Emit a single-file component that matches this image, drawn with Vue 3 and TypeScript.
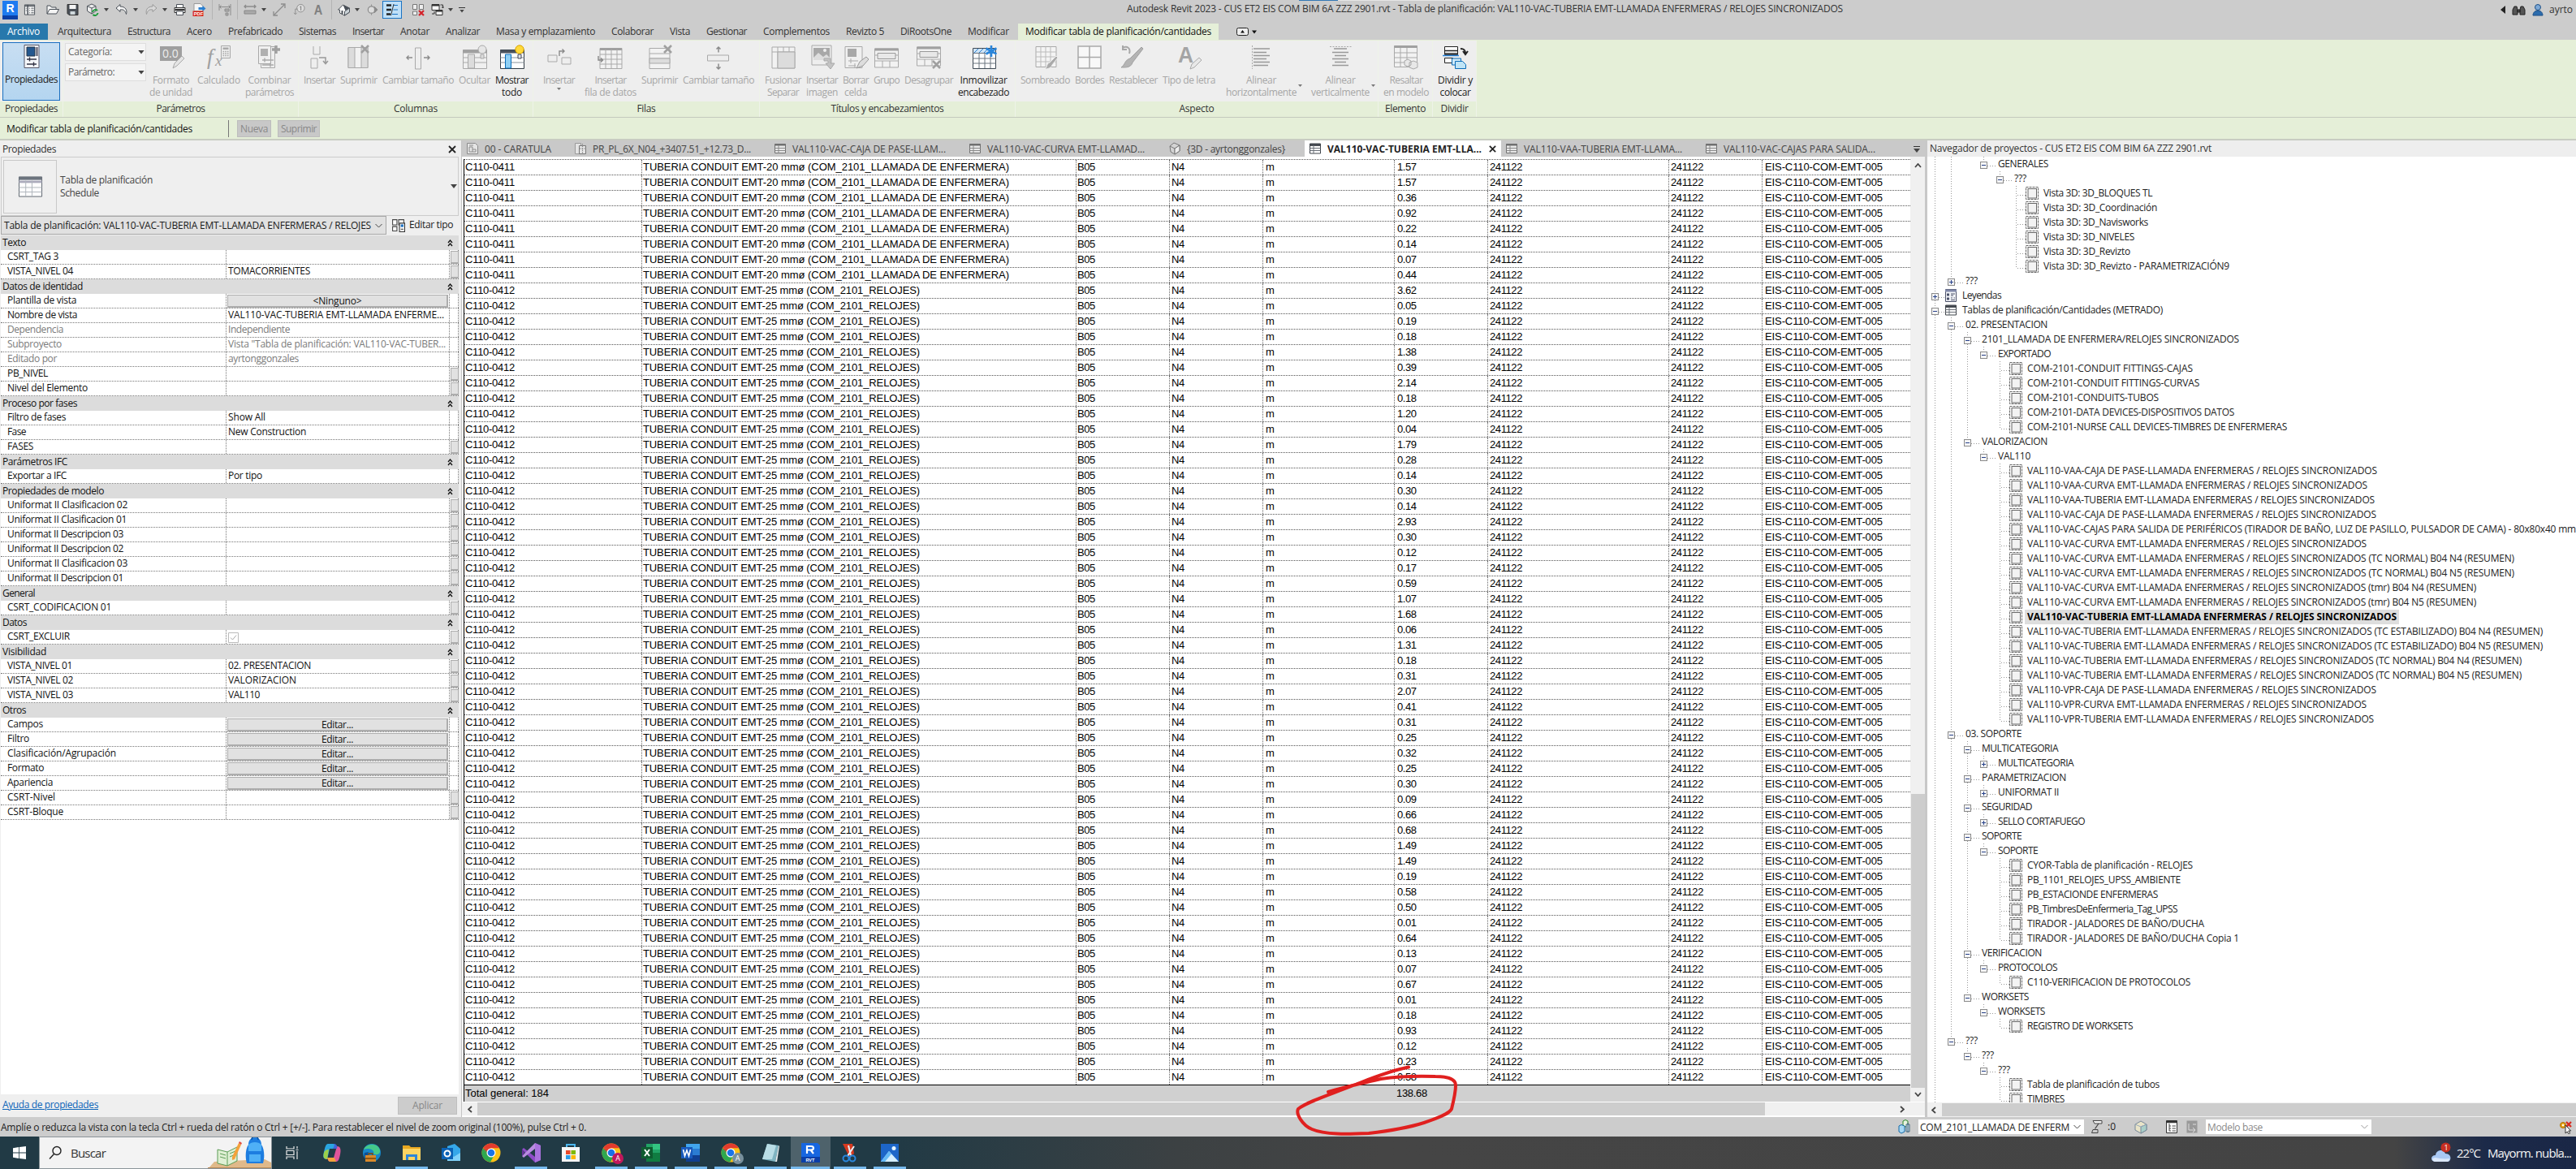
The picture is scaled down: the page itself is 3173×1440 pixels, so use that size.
<script setup lang="ts">
interface Btn { ic: string; l1: string; l2?: string; w: number; ml?: number; on?: boolean; dd?: 'below' | 'side'; w1?: number; w2?: number }
interface Panel { name: string; w: number; lw: number; btns: Btn[] }
interface Prop { n: string; w: number; v?: string; vw?: number; kind?: 'btn' | 'check'; dim?: boolean; side?: boolean }
interface Group { n: string; w: number; rows: Prop[] }
interface Node { d: number; t: string; w: number; k?: 'open' | 'shut' | 'leaf'; ic?: string; sel?: boolean }

// Tracks a label so that it spans the given width in pixels
const track = (el: HTMLElement, width?: number) => {
  if (!width) return
  el.style.letterSpacing = '0px'
  const natural = el.getBoundingClientRect().width
  const count = (el.textContent || '').length
  if (count) el.style.letterSpacing = ((width - natural) / count).toFixed(3) + 'px'
}
const vFit = { mounted: (el: HTMLElement, b: { value?: number }) => track(el, b.value) }

const G = '#a9a9a9'
const L = '#dcdcdc'
const K = '#4a5058'
const B = '#0c6cb8'

const icons: Record<string, string> = {
  // quick access, 16 x 16
  home: `<path d="M1.5 1.5h13v13h-13z" fill="#f4f4f4" stroke="${K}"/><path d="M1.5 3h13M5.5 1.5v13" stroke="${K}" stroke-width="1.6"/><path d="M7.5 6h1M10 6h3.5M7.5 9h1M10 9h3.5M7.5 12h1M10 12h3.5M3 6h1M3 9h1" stroke="${K}"/>`,
  open: `<path d="M1 13V3h4l1.5 2H12v2.5M1 13l3-5.500h11.500L12.500 13z" fill="#f4f4f4" stroke="${K}"/>`,
  save: `<path d="M1.5 1.500h13v13h-11l-2-2z" fill="${K}" stroke="#333"/><path d="M4 2h8v5H4z" fill="#f4f4f4"/><path d="M5 10h6v4H5z" fill="#cfd8dc"/>`,
  sync: `<path d="M7 1l5 2.500v6L7 13 1.500 9.500v-6z" fill="#eee" stroke="${K}"/><path d="M1.500 3.500L7 6l5-2.500M7 6v7" fill="none" stroke="${K}"/><path d="M8 11a3.500 3.500 0 0 1 6-2M14.500 12a3.500 3.500 0 0 1-6 2" stroke="#1f9a3d" stroke-width="2" fill="none"/>`,
  undo: `<path d="M6 1.500L1 6l5 4.500V8c4-.6 6 .5 7.500 5.500 1.500-5-1-9.500-7.500-9.500z" fill="#f4f4f4" stroke="${K}"/>`,
  redo: `<path d="M10 1.500L15 6l-5 4.500V8c-4-.6-6 .5-7.500 5.500C1 8.500 3.500 4 10 4z" fill="#d8d8d8" stroke="#999"/>`,
  print: `<path d="M4 1.500h8V6H4z" fill="#fff" stroke="${K}"/><path d="M1.500 5.500h13v6h-13z" fill="#e4e4e4" stroke="#333"/><path d="M2 7h12v2H2z" fill="#333"/><path d="M4 10h8v4.500H4z" fill="#fff" stroke="${K}"/>`,
  pdf: `<path d="M1.500.500h8l3 3v6h-11z" fill="#f6f6f6" stroke="#999"/><path d="M7 5h5V3l4 3.500-4 3.500V8H7z" fill="#2a7fd0"/><path d="M0 9.500h13V16H0z" fill="#d8281c"/><text x="1.200" y="14.800" font-size="5.800" font-weight="bold" fill="#fff" font-family="Liberation Sans">PDF</text>`,
  dims: `<path d="M1 1v8M15 1v14M1 4.500h14M3.500 2.500L1.500 4.500l2 2M12.500 2.500l2 2-2 2" stroke="#8c8c8c" fill="none"/><path d="M8 7h5v3H8zM9 12h3v3H9z" fill="#aaa" stroke="#8c8c8c"/>`,
  meas: `<path d="M1 4h14M3 2L1 4l2 2M13 2l2 2-2 2" stroke="#8c8c8c" stroke-width="1.300" fill="none"/><path d="M1 9h14v4H1z" fill="#aaa" stroke="#888"/>`,
  diag: `<path d="M2 14L14 2M1 10v5h5M10 1h5v5" stroke="#8c8c8c" stroke-width="1.300" fill="none"/>`,
  tag: `<circle cx="10" cy="6" r="5" fill="#ddd" stroke="#8c8c8c"/><path d="M6 7H3v7M1 12l2 2 2-2" stroke="#8c8c8c" fill="none"/><path d="M9 4.500L10.300 3.500V9" stroke="#777" fill="none"/>`,
  txt: `<text x="2" y="15" font-size="18" font-weight="bold" fill="#808080" font-family="Liberation Sans" textLength="12" lengthAdjust="spacingAndGlyphs">A</text>`,
  house: `<path d="M1 8l6-6 8 4v5l-6 4-6-3V8z" fill="#fff" stroke="${K}"/><path d="M7 2l8 4-5 3z" fill="${K}"/><path d="M9 10v5l6-4V6z" fill="#cbd3d8" stroke="${K}"/><path d="M5 9h2v4H5z" fill="${K}"/>`,
  sect: `<circle cx="7" cy="8" r="4.500" fill="#ddd" stroke="#8c8c8c" stroke-width="1.300"/><path d="M7 1v2.500M7 12.500V15M11 4l4 4-4 4z" stroke="#8c8c8c" fill="#8c8c8c"/>`,
  thin: `<path d="M1 2.500h6M1 8h6M1 13.500h5" stroke="#222" stroke-width="2.600"/><path d="M9.500 2.500H15M9.500 8H15M8 13.500h7" stroke="#1a74c4"/><path d="M10 1L6.500 15" stroke="#333"/>`,
  close: `<path d="M1.500 1.500h5v6h-5zM9.500 1.500h5v6h-5zM1.500 10h5v4.500h-5z" fill="#eee" stroke="#777"/><path d="M9 9l6 6M15 9l-6 6" stroke="#d3222a" stroke-width="2.200"/>`,
  swap: `<path d="M1.500 1.500h9v7h-9zM6.500 8.500h8v6h-8z" fill="#f6f6f6" stroke="#333"/><path d="M1.500 2.500h9M6.500 9.500h8" stroke="#333" stroke-width="2"/><path d="M12 2h3v4M13.500 4.500L15 6l1.200-1.500M4.500 10v3h-3" stroke="#333" fill="none"/>`,
  // document kinds, 16 x 16
  sheet: `<path d="M1.500 1.500h10l3 3v10h-13z" fill="#e4e4e4" stroke="#8a8a8a"/><path d="M4 12V6h4v6zM8 9h4v3H8M4 4h5" fill="none" stroke="#8a8a8a"/>`,
  plan: `<path d="M1.500 1.500h7v13h-7z" fill="#e4e4e4" stroke="#999"/><path d="M6.500 4.500h8v10h-8z" fill="#e4e4e4" stroke="#777"/><path d="M10.500 2v12M7 8h7" stroke="#888" stroke-dasharray="1.500 1"/>`,
  table: `<path d="M1.500 2.500h13v11h-13z" fill="#e8e8e8" stroke="#707070"/><path d="M1 3.500h14" stroke="#707070" stroke-width="2"/><path d="M1.500 7.500h13M1.500 10.500h13M6 4v9.500" stroke="#8a8a8a"/>`,
  tableOn: `<path d="M1.500 2h13v12h-13z" fill="#fff" stroke="#3f444b"/><path d="M1 3.500h14" stroke="#3f444b" stroke-width="2.800"/><path d="M1.500 7.500h13M1.500 10.500h13M6 4v10" stroke="#6a7078"/>`,
  legend: `<path d="M1.500.500h13v15h-13z" fill="#f2f4f8" stroke="#4a5068"/><path d="M1 2h14" stroke="#8088a8" stroke-width="3"/><path d="M3 5.500h3v3H3z" fill="#4a5068"/><circle cx="4.500" cy="12" r="1.700" fill="#4a5068"/><path d="M8 6h5M8 8h3M8 11h2M11.500 11H13M8 13.500h5" stroke="#4a5068"/>`,
  view3d: `<path d="M2 5l5-4 7 3v7l-6 4-5-3z" fill="#d4d4d4" stroke="#777"/><path d="M2 5l6 3 6-4M8 8v7" fill="none" stroke="#777"/><path d="M8 8l6-4v7l-6 4z" fill="#eee" stroke="#777"/>`,
  edit: `<path d="M1.500 1.500h5v6h-5zM8.500 1.500h6v6h-6zM1.500 9.500h5v5h-5z" fill="#fff" stroke="#444"/><path d="M9.500 5.500h6v10h-6z" fill="#fff" stroke="#333"/><path d="M11 7h3v3h-3z" fill="#1a6fc0"/><path d="M11 12.500h3" stroke="#333"/>`,
  // ribbon, 32 x 32
  props: `<path d="M7 1.500h18v28H7z" fill="#f6f8fb" stroke="#556"/><path d="M10 4h10v11H10z" fill="#24588f" stroke="#234"/><path d="M22.500 4v11" stroke="#556" stroke-width="2"/><path d="M10 19h12M10 25h12M13.500 16.500v5M18.500 22.500v5" stroke="#334" stroke-width="1.400"/>`,
  fmt: `<path d="M2 2h27v18H2z" fill="#9f9f9f"/><text x="5" y="16" font-size="14" fill="#eee" font-family="Open Sans">0.0</text><path d="M18 29l2-6 9-9 3 3-9 9z" fill="#e4e4e4" stroke="${G}"/>`,
  calc: `<text x="1" y="24" font-size="27" font-style="italic" fill="#a0a0a0" font-family="Liberation Serif">f</text><text x="11" y="26" font-size="19" font-style="italic" fill="#a0a0a0" font-family="Liberation Serif">x</text><path d="M18.500 1.500h11v15h-11z" fill="#eee" stroke="${G}"/><path d="M20.500 3.500h7v2.500h-7z" fill="${G}"/><path d="M20.500 8.500h7M20.500 11h7M20.500 13.500h7" stroke="${G}" stroke-dasharray="1.600 1.100" stroke-width="1.600"/>`,
  comb: `<path d="M5.500 2.500h17v26h-17z" fill="#eee" stroke="${G}"/><path d="M2.500 1.500h15v22h-15z" fill="#f0f0f0" stroke="${G}"/><path d="M5 5h9v9H5z" fill="#b0b0b0"/><path d="M7 19h14M7 25h14M10 16.500v5M17 22.500v5" stroke="${G}" stroke-width="1.400"/><path d="M24 1v10M19 6h10" stroke="#a0a0a0" stroke-width="3.400"/>`,
  insc: `<path d="M8 2v10h8V2M5 29V17h8v12z" fill="#eee" stroke="${G}"/><path d="M15 16h8v7M20 20l3 3.500 3-3.500" stroke="#999" stroke-width="1.500" fill="none"/>`,
  delc: `<path d="M3 3.500h24v25H3z" fill="#f2f2f2" stroke="${G}"/><path d="M3 3.500h8v25H3zM19 3.500h8v25h-8z" fill="${L}" stroke="${G}"/><path d="M19 1l9 9M28 1l-9 9" stroke="#a0a0a0" stroke-width="2.600"/>`,
  wide: `<path d="M12.500 4h7v26h-7z" fill="#eee" stroke="${G}"/><path d="M9 16H2M4.500 13.500L2 16l2.500 2.500M23 16h7M27.500 13.500L30 16l-2.500 2.500" stroke="#8a8a8a" stroke-width="1.400" fill="none"/>`,
  hide: `<path d="M1.500 6.500h29v23h-29z" fill="#f0f0f0" stroke="${G}"/><path d="M1 8.500h30" stroke="#a0a0a0" stroke-width="4"/><path d="M1.500 16h29M1.500 22h29" stroke="${G}"/><path d="M7.500 12h8v17h-8z" fill="${L}" stroke="${G}"/><circle cx="25" cy="6" r="5" fill="#e6e6e6" stroke="${G}"/><path d="M23 12h4v5h-4z" fill="${L}" stroke="${G}"/>`,
  show: `<path d="M1.500 6.500h29v23h-29z" fill="#fff" stroke="#333c46"/><path d="M1 8.500h30" stroke="#4a525c" stroke-width="4"/><path d="M1.500 16h29M1.500 22h29" stroke="#8a929a"/><path d="M7.500 12h7v17h-7z" fill="#8fd0f5" stroke="#0c6cb8"/><circle cx="25" cy="6" r="5.200" fill="#ffd93a" stroke="#d9a400"/><path d="M23 12h4v5h-4z" fill="#dfe6ea" stroke="#445"/>`,
  insr: `<path d="M2 13h11v8H2zM19 16h11v8H19z" fill="#eee" stroke="${G}"/><path d="M16 14V8h6M19.500 5.500L22 8l-2.500 2.500" stroke="#8a8a8a" stroke-width="1.400" fill="none"/>`,
  insd: `<path d="M3 4.500h27v25H3z" fill="#f2f2f2" stroke="${G}"/><path d="M3 5.500h27" stroke="#a0a0a0" stroke-width="3"/><path d="M3 12h27M3 18h27M3 24h27M10 6v23M17 6v23M24 6v23" stroke="${G}"/><path d="M1 14v5h5M4 16.500L6.500 19 4 21.500" stroke="#888" stroke-width="1.400" fill="none"/>`,
  delr: `<path d="M3 4.500h25v25H3z" fill="#f2f2f2" stroke="${G}"/><path d="M3 11h25M3 17h25" stroke="${G}"/><path d="M3 17h25v6H3z" fill="${L}" stroke="${G}"/><path d="M21 1l9 9M30 1l-9 9" stroke="#a0a0a0" stroke-width="2.600"/>`,
  tall: `<path d="M2.500 13h26v7h-26z" fill="#eee" stroke="${G}"/><path d="M16 9.500V3M13.500 5.500L16 3l2.500 2.500M16 23.500V30M13.500 27.500L16 30l2.500-2.500" stroke="#8a8a8a" stroke-width="1.500" fill="none"/>`,
  merge: `<path d="M2 3h28v26H2z" fill="#f2f2f2" stroke="${G}"/><path d="M2 9h28M9 3v26M16 3v6M23 3v6" stroke="${G}"/><path d="M9 9h21v20H9z" fill="${L}" stroke="${G}"/>`,
  image: `<path d="M3 1h24v24H3z" fill="#eee" stroke="${G}"/><path d="M5 4h20v12H5z" fill="#a8a8a8"/><path d="M5 16l6-6 6 5 4-3 4 4v3H5z" fill="#ddd"/><circle cx="19" cy="7" r="2" fill="#eee"/><path d="M18 17h8v6h5l-5 7-6-7h3v-3h-5z" fill="#c4c4c4" stroke="${G}"/>`,
  erase: `<path d="M3 2.500h21v26H3z" fill="#f0f0f0" stroke="${G}"/><path d="M6 5h11v10H6z" fill="#a8a8a8"/><path d="M7 20h12M7 26h9M10 17v6M15 23v6" stroke="${G}"/><path d="M17 29l4-8 8-6 3 3-7 8z" fill="#ddd" stroke="#999"/>`,
  grp: `<path d="M1.500 5h29v23h-29z" fill="#f2f2f2" stroke="${G}"/><path d="M1.500 6h29" stroke="#a0a0a0" stroke-width="3"/><path d="M1.500 13h29M1.500 20h29M11 20v8M20 20v8" stroke="${G}"/><path d="M5 10.500h22v7H5z" fill="#e8e8e8" stroke="#999"/>`,
  ungrp: `<path d="M1.500 3h29v23h-29z" fill="#f2f2f2" stroke="${G}"/><path d="M1.500 4h29" stroke="#a0a0a0" stroke-width="3"/><path d="M1.500 11h29M1.500 18h29M11 18v8M20 18v8" stroke="${G}"/><path d="M5 8.500h22v7H5z" fill="#e8e8e8" stroke="#999"/><path d="M21 20l9 9M30 20l-9 9" stroke="#a0a0a0" stroke-width="2.600"/>`,
  freeze: `<path d="M2.500 4.500h28v25h-28z" fill="#fff" stroke="#3f4a56"/><path d="M3 5h27v5H3z" fill="#cfe4f6"/><path d="M4 10l5-5M10 10l5-5M16 10l5-5" stroke="#2a7fd0"/><path d="M2.500 10.500h28M2.500 17h28M2.500 23h28M10 10v19M17 10v19M24 10v19" stroke="#6a747e"/><path d="M25 1v14M18.500 4.500l13 7M31.500 4.500l-13 7" stroke="#2a86dc" stroke-width="2.600"/>`,
  shade: `<path d="M4 2.500h25v25H4z" fill="#f4f4f4" stroke="${G}"/><path d="M4 9h25M4 15h25M4 21h25M10 2.500v25M16 2.500v25M22 2.500v25" stroke="#bbb"/><path d="M15 30c3 0 8-1 9-5l7-9-2-2-8 8c-4 1-3 6-6 8z" fill="#aaa" stroke="#eee"/>`,
  bord: `<path d="M2 2h28v27H2z" fill="#f8f8f8" stroke="${G}" stroke-width="1.500"/><path d="M16 2v27M2 15.500h28" stroke="${G}" stroke-width="1.500"/>`,
  reset: `<path d="M3 4c5-3 10 0 8 7M3 1v5h5" stroke="#a8a8a8" stroke-width="2" fill="none"/><path d="M1 28c4 0 12 1 14-6l13-17-2-2-14 14c-7 2-6 8-11 11z" fill="#b4b4b4" stroke="#a0a0a0"/>`,
  font: `<text x="2" y="22" font-size="28" font-weight="bold" fill="#a4a4a4" font-family="Liberation Sans" textLength="19" lengthAdjust="spacingAndGlyphs">A</text><path d="M17 30l2-6 9-8 3 3-9 9z" fill="#e8e8e8" stroke="${G}"/>`,
  alh: `<path d="M4.500 1v29" stroke="${G}" stroke-dasharray="2 1.500"/><path d="M6 5h20M6 9.500h16M6 13.500h20M6 17.500h16M6 21.500h20M6 25.500h18" stroke="#999" stroke-width="1.300"/>`,
  alv: `<path d="M3 2.500h27" stroke="${G}" stroke-dasharray="2 1.500"/><path d="M8 5h16M6 9.500h20M9 13.500h14M6 17.500h20M9 21.500h14M6 25.500h20" stroke="#999" stroke-width="1.300"/>`,
  hilite: `<path d="M1.500 1.500h28v26h-28z" fill="#f2f2f2" stroke="${G}"/><path d="M1.500 2.500h28" stroke="#a0a0a0" stroke-width="3"/><path d="M1.500 10h28M1.500 16h28M1.500 22h28M9 4v23M17 4v23" stroke="${G}"/><path d="M14 20l4-2 4 2v5l-4 2-4-2zM20 22l5-2 5 2v6l-5 2-5-2z" fill="#e8e8e8" stroke="${G}"/>`,
  split: `<path d="M2.500 2.500h16v10h-16zM2.500 16.500h10v6h-10z" fill="#fff" stroke="#222"/><path d="M2.500 7.500h16M2.500 11h16" stroke="#222" stroke-width="1.300"/><path d="M0 13.500h20" stroke="#2a86dc" stroke-width="1.500"/><path d="M22 5c5 0 6 2 6 6M25 8l3 4 3-4" stroke="#222" stroke-width="2" fill="none"/><path d="M11.500 17h11v8h-11z" fill="#cfeaf8" stroke="${B}"/><path d="M15.500 20.500h9l4 4v5h-13z" fill="#bfe4f6" stroke="${B}"/>`,
  schedule: `<path d="M1.500 3h29v26h-29z" fill="#fdfdfd" stroke="#5a626c"/><path d="M1 5h30" stroke="#6b737d" stroke-width="4"/><path d="M1.500 9.500h29" stroke="#aab" stroke-width="3"/><path d="M1.500 17h29M1.500 23h29M10 8v21M18 8v21" stroke="#aeb4ba"/>`,
  // status bar, 16 x 18
  ws: `<path d="M6 2l3-1.500L12 2v6L9 9 6 8z" fill="#e8f2e0" stroke="#2d8a2d"/><path d="M1 8l3-1.500L8 8v7l-4 2-3-2z" fill="#a8d8f4" stroke="#146aa8"/><path d="M10 6h4v9h-4zM12 4v12" fill="#cfe4f0" stroke="#44677c"/>`,
  req: `<path d="M3 1.500h11v3.500H9L5 5z" fill="#f4f4f4" stroke="#444"/><path d="M10 5L5.500 11.500" stroke="#444" stroke-width="1.300"/><path d="M3 12.500h6v4H1.500z" fill="#ccc" stroke="#444"/>`,
  cube: `<path d="M8 2l7 4v7l-7 4-7-4V6z" fill="#e9e4c8" stroke="#789"/><path d="M8 9v8l7-4V6z" fill="#a9cfc8" stroke="#789"/><path d="M1 6l7 3 7-3" fill="none" stroke="#9ab"/>`,
  opts: `<path d="M1.500 1.500h13v15h-13z" fill="#fff" stroke="#333"/><path d="M1 3h14" stroke="#333" stroke-width="2.500"/><path d="M5 5v9M5 8h2M5 11h2M5 14h2M8.500 8H13M8.500 11H13M8.500 14H13" stroke="#444"/>`,
  opt2: `<path d="M1.500 1.500h13v15h-13z" fill="#999"/><path d="M4 5v8h8M9 10l3 3-3 3M9 6h4" stroke="#ddd" fill="none"/>`,
  key: `<circle cx="4" cy="7" r="3.500" fill="#e8a61c" stroke="#a86c00"/><circle cx="4" cy="7" r="1.200" fill="#fff"/><path d="M8 3l6 6M14 3L8 9" stroke="#d8281c" stroke-width="2.200"/><path d="M7 7v10l2.200-2 2 3 1.500-1-2-3h3z" fill="#fff" stroke="#333"/>`,
  // taskbar, 24 x 24
  tview: `<path d="M5 4v3h9V4M5 20v-3h9v3M5 9.500h9v5H5zM18 4v3M18 10v10M16.500 8.500h3" fill="none" stroke="#e8e8e8" stroke-width="1.200"/>`,
  copilot: `<path d="M7 1h7c3 0 3 3 4 6H9L6 20c-6 0-5-5-4-9S4 1 7 1z" fill="#2aa5e0"/><path d="M2 12c1-3 3-4 6-4l-2 12c-5 0-5-4-4-8z" fill="#9bd04a"/><path d="M17 23h-7c-3 0-3-3-4-5h8l4-14c5 0 5 5 4 10s-2 9-5 9z" fill="#e0559a"/><path d="M17 23h-7c-2 0-3-2-4-5h9z" fill="#f2a33c"/><path d="M14 1c3 0 5 2 4 6h-5l2-4z" fill="#4263d8"/>`,
  edge: `<circle cx="12" cy="12" r="11" fill="#1787c9"/><path d="M2 8C5 0 20-1 22 9c1 6-7 6-8 4 2-4-5-8-12-5z" fill="#45c98a"/><path d="M8 11c-3 5 2 11 9 10-9 5-16-2-14-9z" fill="#0c4f96"/><path d="M4 15h13v8H4z" fill="#d8892a"/><path d="M8 15v-2h5v2M4 19h13" stroke="#7b4708" fill="none" stroke-width="1.300"/>`,
  folder: `<path d="M1 3h8l2 2h12v16H1z" fill="#e8a820"/><path d="M1 7h22v14H1z" fill="#fcd462"/><path d="M5 14h14v7h-3v-4H8v4H5z" fill="#2d86d8"/>`,
  outlook: `<path d="M7 4l9-3 7 6v13H7z" fill="#35a8ea"/><path d="M7 12l8 5 8-5v10H7z" fill="#7fd2fa"/><path d="M0 6h14v14H0z" fill="#0b62b5"/><circle cx="7" cy="13" r="3.500" fill="none" stroke="#fff" stroke-width="2"/>`,
  chrome: `<circle cx="12" cy="12" r="11.500" fill="#fbc116"/><path d="M2 6.200A11.500 11.500 0 0 1 22 6.200H12z" fill="#e33b2e"/><path d="M2 6.200A11.500 11.500 0 0 0 11 23.500l5-9L12 12 7 14.500z" fill="#2da94f"/><path d="M2 6.200L7 15l5-9z" fill="#e33b2e"/><path d="M2 6.200l5 8.800 1-3z" fill="#2da94f"/><circle cx="12" cy="12" r="5.500" fill="#fff"/><circle cx="12" cy="12" r="4.300" fill="#1a73e8"/>`,
  vs: `<path d="M17 0l7 3v18l-7 3L1 8l2-2 14 11z" fill="#8e4bc6"/><path d="M17 0v7L3 18l-2-2z" fill="#b98be0"/><path d="M1 8v8l3-4z" fill="#6b2fa0"/><path d="M17 0l7 3v18l-7 3z" fill="#a871dc"/>`,
  store: `<path d="M7 6V2h10v4" fill="none" stroke="#4cb6ee" stroke-width="2"/><path d="M1 5h22v18H1z" fill="#f5f5f5"/><path d="M6 9h5.500v5H6z" fill="#e8492a"/><path d="M12.500 9H18v5h-5.500z" fill="#7fba00"/><path d="M6 15h5.500v5H6z" fill="#2a9de8"/><path d="M12.500 15H18v5h-5.500z" fill="#fcb900"/>`,
  excel: `<path d="M6 1h17v22H6z" fill="#21a366"/><path d="M14 1h9v7h-9z" fill="#33c481"/><path d="M6 12h17v11H6z" fill="#107c41"/><path d="M0 5h14v14H0z" fill="#0e5c30"/><path d="M4 8l6 8M10 8l-6 8" stroke="#fff" stroke-width="2"/>`,
  word: `<path d="M6 1h17v22H6z" fill="#2b7cd3"/><path d="M6 1h17v6H6z" fill="#41a5ee"/><path d="M6 15h17v8H6z" fill="#103f91"/><path d="M0 5h14v14H0z" fill="#185abd"/><path d="M2.500 8l2 8L7 9l2.500 7 2-8" stroke="#fff" stroke-width="1.600" fill="none"/>`,
  note: `<path d="M8 1l14 2-4 20-16-3z" fill="#7fb4c2"/><path d="M8 1l11 2-5 17-12 0z" fill="#b9dde6"/><path d="M18 23l4-20 1 1-3 19z" fill="#e8eef0"/>`,
  revit: `<path d="M1 0h20l3 3v21H1z" fill="#1766e0"/><path d="M1 17h23v7H1z" fill="#0a3ea8"/><path d="M8 13V4h5c4 0 4 4.500 0 4.500H8M12.500 8.500L16 13" stroke="#fff" stroke-width="2.200" fill="none"/><text x="6.500" y="22.500" font-size="5.500" font-weight="bold" fill="#fff" font-family="Liberation Sans">RVT</text>`,
  snip: `<path d="M3 1h12l2 12-6 4z" fill="#d83a20"/><path d="M10 3l3 12M17 4L9 16" stroke="#e8eef4" stroke-width="2"/><circle cx="7" cy="19" r="3.500" fill="none" stroke="#2a86dc" stroke-width="2"/><circle cx="15" cy="19" r="3.500" fill="none" stroke="#2a86dc" stroke-width="2"/>`,
  photos: `<path d="M1 1h22v22H1z" fill="#1d66c8"/><path d="M1 23l10-13 12 13z" fill="#d5efff"/><path d="M11 10l3 3.500L6 23H1z" fill="#63b9f5"/><circle cx="17" cy="6.500" r="2.500" fill="#e6f5ff"/>`,
}

const qat: { ic: string; w: number; g: number; box?: boolean }[] = [
  { ic: 'home', w: 15, g: 7 }, { ic: 'open', w: 16, g: 13 }, { ic: 'save', w: 17, g: 8 }, { ic: 'sync', w: 16, g: 8 },
  { ic: 'v', w: 6, g: 6 }, { ic: 'undo', w: 16, g: 8 }, { ic: 'v', w: 6, g: 6 }, { ic: 'redo', w: 16, g: 8 },
  { ic: 'v', w: 6, g: 6 }, { ic: 'print', w: 17, g: 7 }, { ic: 'pdf', w: 17, g: 7 }, { ic: '|', w: 1, g: 7 },
  { ic: 'dims', w: 16, g: 7 }, { ic: '|', w: 1, g: 7 }, { ic: 'meas', w: 16, g: 7 }, { ic: 'v', w: 6, g: 6 },
  { ic: 'diag', w: 16, g: 8 }, { ic: 'tag', w: 15, g: 9 }, { ic: 'txt', w: 14, g: 9 }, { ic: '|', w: 1, g: 9 },
  { ic: 'house', w: 17, g: 6 }, { ic: 'v', w: 6, g: 5 }, { ic: 'sect', w: 15, g: 8 }, { ic: 'thin', w: 24, g: 5, box: true },
  { ic: 'close', w: 16, g: 12 }, { ic: 'swap', w: 17, g: 7 }, { ic: 'v', w: 6, g: 5 }, { ic: '=', w: 8, g: 7 },
]

const menu: [string, number][] = [
  ['Arquitectura', 66], ['Estructura', 53], ['Acero', 31], ['Prefabricado', 67], ['Sistemas', 46], ['Insertar', 39],
  ['Anotar', 36], ['Analizar', 42], ['Masa y emplazamiento', 122], ['Colaborar', 52], ['Vista', 25], ['Gestionar', 50],
  ['Complementos', 82], ['Revizto 5', 47], ['DiRootsOne', 63], ['Modificar', 51],
]

const panels: Panel[] = [
  { name: 'Columnas', w: 289, lw: 54, btns: [
    { ic: 'insc', l1: 'Insertar', w: 39 }, { ic: 'delc', l1: 'Suprimir', w: 46 }, { ic: 'wide', l1: 'Cambiar tamaño', w: 88 },
    { ic: 'hide', l1: 'Ocultar', w: 39 }, { ic: 'show', l1: 'Mostrar', l2: 'todo', w: 41, w2: 25, on: true }] },
  { name: 'Filas', w: 279, lw: 23, btns: [
    { ic: 'insr', l1: 'Insertar', w: 39, ml: 6, dd: 'below' }, { ic: 'insd', l1: 'Insertar', l2: 'fila de datos', w: 64, w1: 39, ml: 6 },
    { ic: 'delr', l1: 'Suprimir', w: 45 }, { ic: 'tall', l1: 'Cambiar tamaño', w: 88 }] },
  { name: 'Títulos y encabezamientos', w: 315, lw: 139, btns: [
    { ic: 'merge', l1: 'Fusionar', l2: 'Separar', w: 45, w2: 39 }, { ic: 'image', l1: 'Insertar', l2: 'imagen', w: 39 },
    { ic: 'erase', l1: 'Borrar', l2: 'celda', w: 32, w2: 28 }, { ic: 'grp', l1: 'Grupo', w: 32 }, { ic: 'ungrp', l1: 'Desagrupar', w: 60 },
    { ic: 'freeze', l1: 'Inmovilizar', l2: 'encabezado', w: 63, w1: 58, on: true }] },
  { name: 'Aspecto', w: 447, lw: 43, btns: [
    { ic: 'shade', l1: 'Sombreado', w: 61 }, { ic: 'bord', l1: 'Bordes', w: 36 }, { ic: 'reset', l1: 'Restablecer', w: 60 },
    { ic: 'font', l1: 'Tipo de letra', w: 65 }, { ic: 'alh', l1: 'Alinear', l2: 'horizontalmente', w: 87, w1: 37, ml: 7, dd: 'side' },
    { ic: 'alv', l1: 'Alinear', l2: 'verticalmente', w: 72, w1: 37, ml: 12, dd: 'side' }] },
  { name: 'Elemento', w: 67, lw: 50, btns: [{ ic: 'hilite', l1: 'Resaltar', l2: 'en modelo', w: 56, w1: 41 }] },
  { name: 'Dividir', w: 54, lw: 34, btns: [{ ic: 'split', l1: 'Dividir y', l2: 'colocar', w: 43, w2: 38, on: true }] },
]
const paramBtns: Btn[] = [
  { ic: 'fmt', l1: 'Formato', l2: 'de unidad', w: 53, w1: 45 }, { ic: 'calc', l1: 'Calculado', w: 53 }, { ic: 'comb', l1: 'Combinar', l2: 'parámetros', w: 60, w1: 53 },
]

const u = (n: string, w: number): Prop => ({ n, w, side: true })
const e = (n: string, w: number): Prop => ({ n, w, v: 'Editar...', vw: 39, kind: 'btn' })
const groups: Group[] = [
  { n: 'Texto', w: 29, rows: [u('CSRT_TAG 3', 63), { n: 'VISTA_NIVEL 04', w: 81, v: 'TOMACORRIENTES', vw: 101, side: true }] },
  { n: 'Datos de identidad', w: 99, rows: [
    { n: 'Plantilla de vista', w: 85, v: '<Ninguno>', vw: 60, kind: 'btn' },
    { n: 'Nombre de vista', w: 86, v: 'VAL110-VAC-TUBERIA EMT-LLAMADA ENFERME...', vw: 266 },
    { n: 'Dependencia', w: 69, v: 'Independiente', vw: 76, dim: true },
    { n: 'Subproyecto', w: 67, v: 'Vista "Tabla de planificación: VAL110-VAC-TUBER...', vw: 268, dim: true },
    { n: 'Editado por', w: 61, v: 'ayrtonggonzales', vw: 87, dim: true },
    u('PB_NIVEL', 50), u('Nivel del Elemento', 99)] },
  { n: 'Proceso por fases', w: 92, rows: [
    { n: 'Filtro de fases', w: 72, v: 'Show All', vw: 46 }, { n: 'Fase', w: 23, v: 'New Construction', vw: 96 }, u('FASES', 32)] },
  { n: 'Parámetros IFC', w: 80, rows: [{ n: 'Exportar a IFC', w: 73, v: 'Por tipo', vw: 42 }] },
  { n: 'Propiedades de modelo', w: 125, rows: [
    u('Uniformat II Clasificacion 02', 148), u('Uniformat II Clasificacion 01', 147), u('Uniformat II Descripcion 03', 143),
    u('Uniformat II Descripcion 02', 143), u('Uniformat II Clasificacion 03', 148), u('Uniformat II Descripcion 01', 143)] },
  { n: 'General', w: 40, rows: [u('CSRT_CODIFICACION 01', 128)] },
  { n: 'Datos', w: 30, rows: [{ n: 'CSRT_EXCLUIR', w: 77, kind: 'check', side: true }] },
  { n: 'Visibilidad', w: 54, rows: [
    { n: 'VISTA_NIVEL 01', w: 80, v: '02. PRESENTACION', vw: 102, side: true },
    { n: 'VISTA_NIVEL 02', w: 81, v: 'VALORIZACION', vw: 84, side: true },
    { n: 'VISTA_NIVEL 03', w: 81, v: 'VAL110', vw: 39, side: true }] },
  { n: 'Otros', w: 29, rows: [
    e('Campos', 44), e('Filtro', 27), e('Clasificación/Agrupación', 134), e('Formato', 45), e('Apariencia', 56),
    u('CSRT-Nivel', 59), u('CSRT-Bloque', 69)] },
]

const tabs: { ic: string; t: string; w: number; tw: number; on?: boolean }[] = [
  { ic: 'sheet', t: '00 - CARATULA', w: 133, tw: 82 },
  { ic: 'plan', t: 'PR_PL_6X_N04_+3407.51_+12.73_D...', w: 246, tw: 195 },
  { ic: 'table', t: 'VAL110-VAC-CAJA DE PASE-LLAM...', w: 240, tw: 189 },
  { ic: 'table', t: 'VAL110-VAC-CURVA EMT-LLAMAD...', w: 246, tw: 194 },
  { ic: 'view3d', t: '{3D - ayrtonggonzales}', w: 173, tw: 121 },
  { ic: 'tableOn', t: 'VAL110-VAC-TUBERIA EMT-LLA...', w: 242, tw: 190, on: true },
  { ic: 'table', t: 'VAL110-VAA-TUBERIA EMT-LLAMA...', w: 246, tw: 195 },
  { ic: 'table', t: 'VAL110-VAC-CAJAS PARA SALIDA...', w: 240, tw: 187 },
]

const lengths = ('1.57 1.57 0.36 0.92 0.22 0.14 0.07 0.44 3.62 0.05 0.19 0.18 1.38 0.39 2.14 0.18 1.20 0.04 1.79 0.28 0.14 0.30 0.14 2.93 ' +
  '0.30 0.12 0.17 0.59 1.07 1.68 0.06 1.31 0.18 0.31 2.07 0.41 0.31 0.25 0.32 0.25 0.30 0.09 0.66 0.68 1.49 1.49 0.19 0.58 ' +
  '0.50 0.01 0.64 0.13 0.07 0.67 0.01 0.18 0.93 0.12 0.23 0.58').split(' ')
const rows = lengths.map((len, i) => ({
  code: i < 8 ? 'C110-0411' : 'C110-0412',
  desc: i < 8 ? 'TUBERIA CONDUIT EMT-20 mmø (COM_2101_LLAMADA DE ENFERMERA)' : 'TUBERIA CONDUIT EMT-25 mmø (COM_2101_RELOJES)',
  dw: i < 8 ? 451 : 341,
  len,
}))

const R = ' ENFERMERAS / RELOJES SINCRONIZADOS'
const f = (d: number, t: string, w: number): Node => ({ d, t, w, k: 'leaf' })
const o = (d: number, t: string, w: number): Node => ({ d, t, w, k: 'open' })
const s = (d: number, t: string, w: number): Node => ({ d, t, w, k: 'shut' })
const nodes: Node[] = [
  o(3, 'GENERALES', 62), o(4, '???', 15),
  f(5, 'Vista 3D: 3D_BLOQUES TL', 134), f(5, 'Vista 3D: 3D_Coordinación', 140), f(5, 'Vista 3D: 3D_Navisworks', 129),
  f(5, 'Vista 3D: 3D_NIVELES', 112), f(5, 'Vista 3D: 3D_Revizto', 107), f(5, 'Vista 3D: 3D_Revizto - PARAMETRIZACIÓN9', 229),
  s(1, '???', 15),
  { d: 0, t: 'Leyendas', w: 48, k: 'shut', ic: 'legend' },
  { d: 0, t: 'Tablas de planificación/Cantidades (METRADO)', w: 247, k: 'open', ic: 'tableOn' },
  o(1, '02. PRESENTACION', 101), o(2, '2101_LLAMADA DE ENFERMERA/RELOJES SINCRONIZADOS', 317), o(3, 'EXPORTADO', 65),
  f(4, 'COM-2101-CONDUIT FITTINGS-CAJAS', 204), f(4, 'COM-2101-CONDUIT FITTINGS-CURVAS', 212), f(4, 'COM-2101-CONDUITS-TUBOS', 162),
  f(4, 'COM-2101-DATA DEVICES-DISPOSITIVOS DATOS', 255), f(4, 'COM-2101-NURSE CALL DEVICES-TIMBRES DE ENFERMERAS', 320),
  o(2, 'VALORIZACION', 81), o(3, 'VAL110', 40),
  f(4, 'VAL110-VAA-CAJA DE PASE-LLAMADA' + R, 431), f(4, 'VAL110-VAA-CURVA EMT-LLAMADA' + R, 419),
  f(4, 'VAL110-VAA-TUBERIA EMT-LLAMADA' + R, 428), f(4, 'VAL110-VAC-CAJA DE PASE-LLAMADA' + R, 430),
  f(4, 'VAL110-VAC-CAJAS PARA SALIDA DE PERIFÉRICOS (TIRADOR DE BAÑO, LUZ DE PASILLO, PULSADOR DE CAMA) - 80x80x40 mm', 676),
  f(4, 'VAL110-VAC-CURVA EMT-LLAMADA' + R, 418),
  f(4, 'VAL110-VAC-CURVA EMT-LLAMADA' + R + ' (TC NORMAL) B04 N4 (RESUMEN)', 600),
  f(4, 'VAL110-VAC-CURVA EMT-LLAMADA' + R + ' (TC NORMAL) B04 N5 (RESUMEN)', 600),
  f(4, 'VAL110-VAC-CURVA EMT-LLAMADA' + R + ' (tmr) B04 N4 (RESUMEN)', 553),
  f(4, 'VAL110-VAC-CURVA EMT-LLAMADA' + R + ' (tmr) B04 N5 (RESUMEN)', 553),
  { d: 4, t: 'VAL110-VAC-TUBERIA EMT-LLAMADA' + R, w: 455, k: 'leaf', sel: true },
  f(4, 'VAL110-VAC-TUBERIA EMT-LLAMADA' + R + ' (TC ESTABILIZADO) B04 N4 (RESUMEN)', 635),
  f(4, 'VAL110-VAC-TUBERIA EMT-LLAMADA' + R + ' (TC ESTABILIZADO) B04 N5 (RESUMEN)', 635),
  f(4, 'VAL110-VAC-TUBERIA EMT-LLAMADA' + R + ' (TC NORMAL) B04 N4 (RESUMEN)', 609),
  f(4, 'VAL110-VAC-TUBERIA EMT-LLAMADA' + R + ' (TC NORMAL) B04 N5 (RESUMEN)', 609),
  f(4, 'VAL110-VPR-CAJA DE PASE-LLAMADA' + R, 430), f(4, 'VAL110-VPR-CURVA EMT-LLAMADA' + R, 418), f(4, 'VAL110-VPR-TUBERIA EMT-LLAMADA' + R, 427),
  o(1, '03. SOPORTE', 69), o(2, 'MULTICATEGORIA', 94), s(3, 'MULTICATEGORIA', 93), o(2, 'PARAMETRIZACION', 104), s(3, 'UNIFORMAT II', 75),
  o(2, 'SEGURIDAD', 62), s(3, 'SELLO CORTAFUEGO', 107), o(2, 'SOPORTE', 49), o(3, 'SOPORTE', 49),
  f(4, 'CYOR-Tabla de planificación - RELOJES', 204), f(4, 'PB_1101_RELOJES_UPSS_AMBIENTE', 189), f(4, 'PB_ESTACIONDE ENFERMERAS', 161),
  f(4, 'PB_TimbresDeEnfermeria_Tag_UPSS', 185), f(4, 'TIRADOR - JALADORES DE BAÑO/DUCHA', 218), f(4, 'TIRADOR - JALADORES DE BAÑO/DUCHA Copia 1', 261),
  o(2, 'VERIFICACION', 74), o(3, 'PROTOCOLOS', 73), f(4, 'C110-VERIFICACION DE PROTOCOLOS', 201),
  o(2, 'WORKSETS', 58), o(3, 'WORKSETS', 58), f(4, 'REGISTRO DE WORKSETS', 130),
  o(1, '???', 15), o(2, '???', 15), o(3, '???', 15), f(4, 'Tabla de planificación de tubos', 163), f(4, 'TIMBRES', 46),
]
// A guide line runs on when a later sibling exists at the same depth
const runsOn = (i: number, d: number) => {
  if (d === 0) return true
  for (let j = i + 1; j < nodes.length; j++) {
    if (nodes[j].d === d) return true
    if (nodes[j].d < d) return false
  }
  return false
}
const tree = nodes.map((n, i) => ({ ...n, guides: Array.from({ length: n.d }, (_, k) => runsOn(i, k)), next: runsOn(i, n.d) }))

const apps: { ic: string; run?: boolean; on?: boolean; badge?: string }[] = [
  { ic: 'tview' }, { ic: 'copilot' }, { ic: 'edge' }, { ic: 'folder', run: true }, { ic: 'outlook' }, { ic: 'chrome' }, { ic: 'vs', run: true },
  { ic: 'store' }, { ic: 'chrome', run: true, badge: '#c2185b' }, { ic: 'excel', run: true }, { ic: 'word', run: true },
  { ic: 'chrome', run: true, badge: '#78909c' }, { ic: 'note', run: true }, { ic: 'revit', run: true, on: true }, { ic: 'snip', run: true }, { ic: 'photos', run: true },
]
</script>

<template>
  <div class="app">
    <header class="titlebar">
      <div class="logo">R</div>
      <template v-for="(q, i) in qat" :key="i">
        <span v-if="q.ic === 'v'" class="caret" :style="{ marginLeft: q.g + 'px' }"></span>
        <span v-else-if="q.ic === '|'" class="vsep" :style="{ marginLeft: q.g + 'px' }"></span>
        <span v-else-if="q.ic === '='" class="barcaret" :style="{ marginLeft: q.g + 'px' }"><i class="caret"></i></span>
        <span v-else class="qi" :class="{ boxed: q.box }" :style="{ marginLeft: q.g + 'px', width: q.w + 'px' }">
          <svg viewBox="0 0 16 16" v-html="icons[q.ic]"></svg>
        </span>
      </template>
      <div class="title"><span v-fit="882">Autodesk Revit 2023 - CUS ET2 EIS COM BIM 6A ZZZ 2901.rvt - Tabla de planificación: VAL110-VAC-TUBERIA EMT-LLAMADA ENFERMERAS / RELOJES SINCRONIZADOS</span></div>
      <div class="account">
        <svg width="8" height="10" viewBox="0 0 8 10"><path d="M7 0v10L1 5z" fill="#222" /></svg>
        <svg width="17" height="15" viewBox="0 0 17 15"><path d="M3 3h3l1 4v6H1V7zM11 3h3l2 4v6h-6V7zM7 7h3v3H7z" fill="#555" stroke="#222" /></svg>
        <svg width="17" height="16" viewBox="0 0 17 16"><circle cx="8" cy="5" r="3.500" fill="#7ea9d6" stroke="#1c4f86" /><path d="M2 15c0-8 12-8 12 0z" fill="#2d6cad" stroke="#1c4f86" /></svg>
        <span>ayrto</span>
      </div>
      <div class="progress"></div>
    </header>

    <nav class="menu">
      <span class="file"><span v-fit="40">Archivo</span></span>
      <span v-for="m in menu" :key="m[0]" class="mi"><span v-fit="m[1]">{{ m[0] }}</span></span>
      <span class="mi active"><span v-fit="229">Modificar tabla de planificación/cantidades</span></span>
      <svg class="collapse" width="26" height="10" viewBox="0 0 26 10"><rect x=".5" y=".5" width="14" height="9" rx="2" fill="#eee" stroke="#222" /><path d="M5 6.500h5L7.500 3zM19 3.500h6L22 7.500z" fill="#111" /></svg>
    </nav>

    <section class="ribbon">
      <div class="panel first">
        <div class="body">
          <div class="bigbtn">
            <svg width="32" height="32" viewBox="0 0 32 32" v-html="icons.props"></svg>
            <span v-fit="65">Propiedades</span>
          </div>
        </div>
        <div class="plabel"><span v-fit="65">Propiedades</span></div>
      </div>
      <div class="panel param">
        <div class="body">
          <div class="combos">
            <div class="rc"><span v-fit="54">Categoría:</span><i class="caret big"></i></div>
            <div class="rc"><span v-fit="57">Parámetro:</span><i class="caret big"></i></div>
          </div>
          <div v-for="b in paramBtns" :key="b.l1" class="rb" :style="{ width: b.w + 'px' }">
            <svg width="32" height="32" viewBox="0 0 32 32" v-html="icons[b.ic]"></svg>
            <span v-fit="b.w1 || b.w">{{ b.l1 }}</span>
            <span v-if="b.l2" v-fit="b.w2 || b.w">{{ b.l2 }}</span>
          </div>
        </div>
        <div class="plabel"><span v-fit="60">Parámetros</span></div>
      </div>
      <div v-for="p in panels" :key="p.name" class="panel" :style="{ width: p.w + 'px' }">
        <div class="body">
          <div v-for="(b, i) in p.btns" :key="i" class="rb" :class="{ on: b.on }" :style="{ width: b.w + 'px', marginLeft: (b.ml || 0) + 'px' }">
            <svg width="32" height="32" viewBox="0 0 32 32" v-html="icons[b.ic]"></svg>
            <span v-fit="b.w1 || b.w">{{ b.l1 }}</span>
            <span v-if="b.l2" v-fit="b.w2 || b.w">{{ b.l2 }}</span>
            <i v-if="b.dd" class="caret" :class="b.dd"></i>
          </div>
        </div>
        <div class="plabel"><span v-fit="p.lw">{{ p.name }}</span></div>
      </div>
    </section>

    <section class="options">
      <span class="otext"><span v-fit="229">Modificar tabla de planificación/cantidades</span></span>
      <span class="obtn"><span v-fit="34">Nueva</span></span>
      <span class="obtn"><span v-fit="44">Suprimir</span></span>
    </section>

    <main class="work">
      <aside class="props">
        <div class="ptitle"><span v-fit="66">Propiedades</span><svg width="10" height="10" viewBox="0 0 10 10"><path d="M1 1l8 8M9 1L1 9" stroke="#222" stroke-width="1.800" /></svg></div>
        <div class="ptype">
          <div class="preview"><svg width="31" height="26" viewBox="0 2 32 28" preserveAspectRatio="none" v-html="icons.schedule"></svg></div>
          <div class="tname"><span v-fit="114">Tabla de planificación</span><span v-fit="48">Schedule</span></div>
          <i class="caret big"></i>
        </div>
        <div class="pinst">
          <div class="isel">
            <span v-fit="452">Tabla de planificación: VAL110-VAC-TUBERIA EMT-LLAMADA ENFERMERAS / RELOJES</span>
            <svg width="9" height="6" viewBox="0 0 9 6"><path d="M.5 1l4 4 4-4" fill="none" stroke="#444" /></svg>
          </div>
          <svg width="17" height="17" viewBox="0 0 16 16" v-html="icons.edit"></svg>
          <span v-fit="54">Editar tipo</span>
        </div>
        <div class="pgrid">
          <template v-for="g in groups" :key="g.n">
            <div class="pg"><span v-fit="g.w">{{ g.n }}</span>
              <svg width="7" height="9" viewBox="0 0 7 9"><path d="M1 4l2.500-3L6 4M1 8l2.500-3L6 8" fill="none" stroke="#111" stroke-width="1.300" /></svg>
            </div>
            <div v-for="r in g.rows" :key="r.n" class="pr" :class="{ dim: r.dim }">
              <div class="pn"><span v-fit="r.w">{{ r.n }}</span></div>
              <div class="pv">
                <div v-if="r.kind === 'btn'" class="pbtn"><span v-fit="r.vw">{{ r.v }}</span></div>
                <svg v-else-if="r.kind === 'check'" class="pcheck" width="13" height="13" viewBox="0 0 13 13"><path d="M.5.5h12v12H.5z" fill="#fff" stroke="#bbb" /><path d="M3 6.500L5.500 9 10 3.500" fill="none" stroke="#aaa" /></svg>
                <span v-else-if="r.v" v-fit="r.vw">{{ r.v }}</span>
              </div>
              <div class="ps"><i v-if="r.side"></i></div>
            </div>
          </template>
        </div>
        <div class="pfoot"><a><span v-fit="118">Ayuda de propiedades</span></a><span class="apply"><span v-fit="37">Aplicar</span></span></div>
      </aside>

      <section class="doc">
        <div class="tabs">
          <div v-for="(t, i) in tabs" :key="i" class="tab" :class="{ on: t.on }" :style="{ width: t.w + 'px' }">
            <svg width="16" height="16" viewBox="0 0 16 16" v-html="icons[t.ic]"></svg>
            <span v-fit="t.tw">{{ t.t }}</span>
            <svg v-if="t.on" class="x" width="9" height="9" viewBox="0 0 10 10"><path d="M1 1l8 8M9 1L1 9" stroke="#222" stroke-width="2" /></svg>
          </div>
          <span class="barcaret more"><i class="caret big"></i></span>
        </div>
        <div class="sheet">
          <div class="table">
            <div v-for="(r, i) in rows" :key="i" class="tr">
              <span class="c1"><span v-fit="61">{{ r.code }}</span></span>
              <span class="c2"><span v-fit="r.dw">{{ r.desc }}</span></span>
              <span class="c3">B05</span><span class="c4">N4</span><span class="c5">m</span><span class="c6">{{ r.len }}</span>
              <span class="c7">241122</span><span class="c8">241122</span><span class="c9"><span v-fit="145">EIS-C110-COM-EMT-005</span></span>
            </div>
            <div class="total"><span class="tg"><span v-fit="103">Total general: 184</span></span><span>138.68</span></div>
          </div>
          <div class="vscroll">
            <svg width="9" height="6" viewBox="0 0 9 6"><path d="M1 5l3.500-4L8 5" fill="none" stroke="#444" stroke-width="1.800" /></svg>
            <div class="vthumb"></div>
            <svg width="9" height="6" viewBox="0 0 9 6"><path d="M1 1l3.500 4L8 1" fill="none" stroke="#444" stroke-width="1.800" /></svg>
          </div>
        </div>
        <div class="hscroll">
          <svg width="6" height="9" viewBox="0 0 6 9"><path d="M5 1L1 4.500 5 8" fill="none" stroke="#444" stroke-width="1.800" /></svg>
          <div class="hthumb"></div>
          <svg width="6" height="9" viewBox="0 0 6 9"><path d="M1 1l4 3.500L1 8" fill="none" stroke="#444" stroke-width="1.800" /></svg>
        </div>
      </section>

      <aside class="browser">
        <div class="btitle"><span v-fit="347">Navegador de proyectos - CUS ET2 EIS COM BIM 6A ZZZ 2901.rvt</span></div>
        <div class="tree">
          <div v-for="(n, i) in tree" :key="i" class="node">
            <i v-for="(g, k) in n.guides" :key="k" class="guide" :class="{ full: g }"></i>
            <i class="guide own" :class="{ next: n.next }">
              <svg v-if="n.k !== 'leaf'" width="9" height="9" viewBox="0 0 9 9"><rect x=".5" y=".5" width="8" height="8" fill="#f6f6f6" stroke="#8a8a8a" /><path d="M2 4.500h5" stroke="#27418a" /><path v-if="n.k === 'shut'" d="M4.500 2v5" stroke="#27418a" /></svg>
            </i>
            <i class="stub" :class="{ tight: n.k === 'leaf' || n.ic }"></i>
            <svg v-if="n.k === 'leaf'" class="leaf" width="16" height="16" viewBox="0 0 16 16"><rect x=".5" y=".5" width="15" height="15" fill="#fff" stroke="#666" stroke-dasharray="3 1" /><rect x="3" y="2.500" width="10.500" height="11.500" fill="#f3f3f3" stroke="#666" /></svg>
            <svg v-else-if="n.ic" class="leaf" width="16" height="16" viewBox="0 0 16 16" v-html="icons[n.ic]"></svg>
            <span class="nt" :class="{ sel: n.sel }"><span v-fit="n.w">{{ n.t }}</span></span>
          </div>
        </div>
        <div class="bscroll">
          <svg width="6" height="9" viewBox="0 0 6 9"><path d="M5 1L1 4.500 5 8" fill="none" stroke="#444" stroke-width="1.800" /></svg>
          <div class="bthumb"></div>
        </div>
      </aside>
    </main>

    <footer class="status">
      <span class="hint"><span v-fit="721">Amplíe o reduzca la vista con la tecla Ctrl + rueda del ratón o Ctrl + [+/-]. Para restablecer el nivel de zoom original (100%), pulse Ctrl + 0.</span></span>
      <svg width="16" height="18" viewBox="0 0 16 18" v-html="icons.ws"></svg>
      <span class="scombo"><span v-fit="184">COM_2101_LLAMADA DE ENFERM</span><svg width="9" height="6" viewBox="0 0 9 6"><path d="M.5 1l4 4 4-4" fill="none" stroke="#444" /></svg></span>
      <svg class="s1" width="16" height="18" viewBox="0 0 16 18" v-html="icons.req"></svg>
      <span class="zero">:0</span>
      <svg class="s2" width="16" height="18" viewBox="0 0 16 18" v-html="icons.cube"></svg>
      <svg class="s3" width="16" height="18" viewBox="0 0 16 18" v-html="icons.opts"></svg>
      <svg class="s4" width="16" height="18" viewBox="0 0 16 18" v-html="icons.opt2"></svg>
      <span class="scombo off"><span v-fit="68">Modelo base</span><svg width="9" height="6" viewBox="0 0 9 6"><path d="M.5 1l4 4 4-4" fill="none" stroke="#999" /></svg></span>
      <svg class="s5" width="16" height="18" viewBox="0 0 16 18" v-html="icons.key"></svg>
    </footer>

    <footer class="taskbar">
      <div class="start"><svg width="16" height="16" viewBox="0 0 16 16"><path d="M0 2.200L7.200 1.100v6.500H0zM8 1l8-1v7.600H8zM0 8.400h7.200v6.500L0 13.800zM8 8.400h8V16l-8-1z" fill="#fff" /></svg></div>
      <div class="search">
        <svg width="18" height="18" viewBox="0 0 18 18"><circle cx="11" cy="6.500" r="5" fill="none" stroke="#222" stroke-width="1.400" /><path d="M7.500 10.500L2 16.500" stroke="#222" stroke-width="1.400" /></svg>
        <span v-fit="43">Buscar</span>
        <svg class="art" width="78" height="40" viewBox="0 0 78 40"><path d="M8 31l62-3 8 4v8H0z" fill="#e0b98a" /><path d="M0 39h78" stroke="#b98a58" stroke-width="2" /><path d="M12 16l12 3 12-6v17l-12 6-12-3z" fill="#dff0d4" stroke="#5b9b54" /><path d="M24 19v17M15 21l7 2M15 25l7 2M27 21l7-3M27 25l7-3" stroke="#5b9b54" /><path d="M38 8l3 2-8 18-3 1v-4z" fill="#f4a23a" /><path d="M38 8l3 2 1-2-3-2z" fill="#e34a3c" /><path d="M50 10c0-12 16-12 16 0 4 6 4 16 2 23H48c-2-7-2-17 2-23z" fill="#1d7de0" /><path d="M50 10c4-4 12-4 16 0v8H50zM51 22h14v9H51z" fill="#4fb0f6" /><path d="M54 4c0-5 8-5 8 0" stroke="#0c55a8" stroke-width="1.500" fill="none" /></svg>
      </div>
      <div v-for="(a, i) in apps" :key="i" class="appi" :class="{ run: a.run, cur: a.on }">
        <svg width="24" height="24" viewBox="0 0 24 24" v-html="icons[a.ic]"></svg>
        <b v-if="a.badge" :style="{ background: a.badge }">A</b>
      </div>
      <div class="weather">
        <svg width="28" height="26" viewBox="0 0 28 26"><path d="M5 24c-6-1-5-8 1-8C7 9 16 8 18 14c8 0 8 9 3 10z" fill="#a9c8f4" /><path d="M5 24c-4-1-4-5 1-5 4 1 12 2 17 1 1 2-1 4-3 4z" fill="#dbe8fb" /><circle cx="18.500" cy="6.500" r="6" fill="#c62f22" /><text x="16.600" y="9.800" font-size="9" fill="#fff" font-family="Open Sans">1</text></svg>
        <span v-fit="29">22°C</span><span class="cond" v-fit="103">Mayorm. nubla...</span>
      </div>
    </footer>

    <svg class="mark" width="212" height="96" viewBox="1590 1308 212 96">
      <path d="M1735 1314.500C1712 1319 1690 1328 1672 1335C1640 1348 1612 1356 1599 1366C1596 1372 1604 1386 1616 1391C1632 1398 1660 1397 1686 1396C1712 1393 1735 1389 1754 1383C1772 1377 1785 1372 1788 1366C1791 1354 1793 1346 1793 1337C1793 1329 1783 1326 1768 1326C1740 1325 1715 1327 1701 1329C1680 1334 1655 1339 1636 1345" fill="none" stroke="#e0201f" stroke-width="4" stroke-linecap="round" stroke-linejoin="round" />
      <path d="M1636 1345L1674 1334L1650 1343L1636 1347z" fill="#e0201f" stroke="#e0201f" stroke-width="2" />
    </svg>
  </div>
</template>

<style>
html, body { margin: 0; overflow: hidden; }
</style>

<style scoped>
.app { position: relative; width: 3173px; height: 1440px; display: flex; flex-direction: column; overflow: hidden; background: #ccc; color: #1a1a1a; font: 12px/16px "Open Sans", "Noto Sans", sans-serif; white-space: pre; }
.app * { box-sizing: border-box; }
svg { display: block; flex: none; }
span > span, .rb > span, .bigbtn > span, .plabel > span, .tab > span { display: inline-block; }
.caret { display: block; flex: none; width: 6px; height: 4px; background: #444; clip-path: polygon(0 0, 100% 0, 50% 100%); }
.caret.big { width: 8px; height: 5px; }

.titlebar { position: relative; height: 29px; display: flex; align-items: center; padding: 0 0 5px 3px; flex: none; }
.logo { width: 19px; height: 23px; background: linear-gradient(#1f7bf0 78%, #0b3fa6 78%); color: #fff; font: bold 14px/18px "Liberation Sans", sans-serif; text-align: center; }
.qi { height: 16px; flex: none; display: block; }
.qi svg { width: 100%; height: 100%; }
.qi.boxed { height: 22px; padding: 2px; background: #bfe0f8; border: 1px solid #1a74c4; }
.vsep { width: 1px; height: 24px; background: #b4b4b4; }
.barcaret { display: block; width: 8px; border-top: 1.500px solid #333; padding: 2px 0 0 1px; }
.title { margin-left: 815px; width: 1691px; color: #333; margin-top: -3px; }
.title span { display: inline-block; }
.account { display: flex; align-items: center; gap: 7px; color: #333; }
.account span { margin-left: -2px; }
.progress { position: absolute; left: 1600px; top: 0; width: 241px; height: 1px; background: linear-gradient(90deg, #3478b5 48px, #e6e6e6 48px); }

.menu { height: 20px; flex: none; display: flex; align-items: center; color: #333; }
.menu .file { width: 59px; height: 20px; background: #2778ac; color: #fff; padding: 2px 0 0 9px; margin-right: 2px; }
.mi { height: 20px; padding: 2px 10px 0; }
.mi.active { margin-left: 1px; width: 247px; padding-left: 9px; background: #e5efd8; color: #111; }
.collapse { margin-left: 22px; }

.ribbon { height: 96px; flex: none; display: flex; background: #e5efd8; border-bottom: 1px solid #c4c9bd; padding-top: 1px; }
.panel { display: flex; flex-direction: column; flex: none; border-right: 1px solid #eef3e8; height: 94px; }
.panel.first { width: 78px; }
.panel.param { width: 290px; }
.body { height: 75px; background: #eee; display: flex; gap: 6px; padding: 4px 0 0 6px; }
.plabel { height: 19px; text-align: center; line-height: 18px; color: #333; }
.first .body { padding: 2px 0 0 3px; }
.bigbtn { width: 71px; height: 72px; border: 1px solid #1a6fc0; background: linear-gradient(#c8def2, #b4d5f0); display: flex; flex-direction: column; align-items: center; color: #222; padding-top: 1px; }
.bigbtn span { margin-top: 4px; }
.param .body { padding-left: 2px; }
.combos { width: 100px; margin: -1px -2px 0 0; display: flex; flex-direction: column; gap: 3px; }
.rc { height: 22px; border: 1px solid #dedede; background: #f4f4f4; color: #666; padding: 0 1px 0 3px; display: flex; align-items: center; justify-content: space-between; }
.rc span { display: inline-block; }
.rb { position: relative; display: flex; flex-direction: column; align-items: center; color: #a6a6a6; line-height: 15px; flex: none; }
.rb svg { margin-bottom: 4px; margin-top: 1px; }
.rb.on { color: #222; }
.caret.below { margin-top: 2px; width: 5px; height: 3px; background: #777; }
.caret.side { position: absolute; right: -7px; top: 50px; width: 5px; height: 3px; background: #777; }

.options { height: 28px; flex: none; background: #e5efd8; border-bottom: 2px solid #c8ccc2; display: flex; align-items: center; padding: 1px 0 0 8px; color: #111; }
.otext { width: 274px; height: 21px; line-height: 21px; border-right: 1px solid #777; margin-right: 10px; }
.obtn { height: 21px; line-height: 19px; padding: 0 3px; margin-right: 8px; border: 1px solid #bdbdbd; background: #c8c8c8; color: #888; }

.work { flex: none; height: 1203px; display: flex; background: #eee; }
.props { width: 568px; flex: none; display: flex; flex-direction: column; background: #efefef; }
.ptitle { height: 20px; display: flex; align-items: center; padding: 2px 6px 0 3px; justify-content: space-between; color: #333; }
.ptitle span, .pinst span, .tname span { display: inline-block; }
.ptype { height: 73px; width: 564px; margin-left: 1px; border: 1px solid #ccc; display: flex; align-items: center; padding-left: 2px; }
.preview { width: 66px; height: 66px; border: 1px solid #c8c8c8; display: flex; align-items: center; justify-content: center; }
.tname { display: flex; flex-direction: column; align-items: flex-start; margin-left: 4px; width: 479px; color: #444; }
.ptype .caret { margin-left: 2px; }
.pinst { height: 24px; display: flex; align-items: center; margin-left: 1px; padding-bottom: 1px; }
.isel { width: 475px; height: 23px; margin-right: 6px; border: 1px solid #a8a8a8; background: #e1e1e1; display: flex; align-items: center; justify-content: space-between; padding: 0 4px 0 3px; }
.pinst > span { margin: -2px 0 0 5px; }
.pgrid { width: 564px; margin-left: 1px; height: 1058px; background: #fff; }
.pg { height: 18px; background: #dcdcdc; display: flex; align-items: center; justify-content: space-between; padding: 0 7px 0 2px; color: #111; }
.pg span { display: inline-block; }
.pr { height: 18px; display: flex; border-bottom: 1px dotted #777; color: #111; }
.pr.dim { color: #7b7b7b; }
.pn { width: 277px; padding-left: 8px; line-height: 16px; }
.pv { width: 275px; border-left: 1px dotted #777; padding-left: 2px; line-height: 16px; }
.pn span, .pv span { display: inline-block; }
.pbtn { width: 272px; height: 16px; margin: 1px 0 0 -1px; background: #e1e1e1; border: 1px solid #adadad; border-bottom-width: 2px; border-right-width: 2px; text-align: center; line-height: 14px; }
.pcheck { margin-top: 3px; }
.ps { width: 12px; border-left: 1px dotted #777; border-right: 1px dotted #777; padding: 1px 0 0 1px; }
.ps i { display: block; width: 10px; height: 16px; background: #e1e1e1; border: 1px solid #adadad; border-bottom-width: 2px; }
.pfoot { flex: 1; display: flex; justify-content: space-between; padding: 3px 5px 0 3px; align-items: flex-start; }
.pfoot a { color: #0a63b8; text-decoration: underline; margin-top: 2px; }
.pfoot a span { text-decoration: underline; }
.apply { width: 73px; height: 22px; background: #ccc; border: 1px solid #bfbfbf; color: #888; text-align: center; line-height: 20px; }

.doc { width: 1803px; flex: none; display: flex; flex-direction: column; background: #fff; border-left: 1px solid #c4c4c4; }
.tabs { height: 20px; display: flex; background: #c9c9c9; color: #444; }
.tab { height: 20px; display: flex; align-items: center; padding-left: 5px; gap: 7px; flex: none; }
.tab.on { background: #fff; color: #222; font-weight: bold; }
.tab.on .x { margin-left: 2px; }
.tab span { margin-top: 2px; }
.more { margin: 7px 0 0 22px; height: 9px; padding-left: 0; }
.sheet { display: flex; padding: 0 0 0 2px; height: 1164px; }
.table { width: 1782px; border-left: 1px solid #000; margin-top: 3px; font: 13px/18px "Liberation Sans", sans-serif; color: #000; display: flex; flex-direction: column; height: 1161px; }
.tr { height: 19px; flex: none; display: flex; border-top: 1px dotted #555; }
.tr > span { border-right: 1px dotted #666; padding-left: 2px; flex: none; height: 18px; letter-spacing: -.4px; }
.tr .c1 { width: 219px; padding-left: 1px; }
.tr .c2 { width: 535px; padding-left: 1px; }
.tr .c3, .tr .c4 { width: 115px; }
.tr .c3 { padding-left: 1px; }
.tr .c5 { width: 162px; padding-left: 3px; }
.tr .c6 { width: 115px; padding-left: 3px; }
.tr .c7 { width: 223px; }
.tr .c8 { width: 115px; }
.tr .c9 { border: 0; padding-left: 3px; }
.total { height: 21px; border-top: 1px solid #000; background: #d0d0d0; display: flex; line-height: 20px; letter-spacing: -.3px; }
.tg { width: 1148px; padding-left: 1px; }
.vscroll { width: 18px; background: #f0f0f0; display: flex; flex-direction: column; align-items: center; padding: 8px 0 6px; }
.vthumb { width: 17px; height: 362px; background: #cdcdcd; margin: auto 0 5px; }
.hscroll { height: 16px; margin-top: 1px; display: flex; align-items: center; background: #f0f0f0; padding-left: 7px; width: 1803px; }
.hthumb { width: 1586px; height: 16px; background: #cdcdcd; margin: 0 166px 0 6px; }

.browser { width: 802px; flex: none; background: #fff; border-left: 3px solid #c8c8c8; display: flex; flex-direction: column; }
.btitle { height: 20px; background: #eee; padding: 2px 0 0 3px; color: #333; }
.btitle span { display: inline-block; }
.tree { height: 1165px; overflow: hidden; color: #222; }
.node { height: 18px; display: flex; align-items: center; }
.guide { position: relative; width: 20px; height: 18px; flex: none; display: block; }
.guide.full { background: repeating-linear-gradient(#999 0 1px, transparent 1px 3px) 9px 0 / 1px 100% no-repeat; }
.guide.own { background: repeating-linear-gradient(#999 0 1px, transparent 1px 3px) 9px 0 / 1px 11px no-repeat, repeating-linear-gradient(90deg, #999 0 1px, transparent 1px 3px) 11px 11px / 10px 1px no-repeat; padding: 6px 0 0 5px; }
.guide.own.next { background: repeating-linear-gradient(#999 0 1px, transparent 1px 3px) 9px 0 / 1px 100% no-repeat, repeating-linear-gradient(90deg, #999 0 1px, transparent 1px 3px) 11px 11px / 10px 1px no-repeat; }
.stub { width: 4px; height: 1px; margin: 5px 3px 0 0; flex: none; background: repeating-linear-gradient(90deg, #999 0 1px, transparent 1px 3px); }
.stub.tight { width: 1px; margin-right: 0; }
.leaf { margin-right: 3px; margin-top: -1px; }
.nt { height: 18px; line-height: 18px; flex: none; }
.leaf + .nt { padding: 0 3px; }
.nt.sel { background: #dedede; color: #000; font-weight: bold; }
.bscroll { height: 18px; display: flex; align-items: center; background: #f0f0f0; padding-left: 5px; }
.bthumb { height: 16px; flex: 1; margin-left: 7px; background: #cdcdcd; }

.status { height: 24px; flex: none; background: #ccc; display: flex; align-items: center; color: #222; }
.hint { width: 2336px; padding: 1px 0 0 1px; }
.status > svg:first-of-type { margin-left: 2px; }
.scombo { width: 204px; height: 18px; line-height: 17px; background: #fff; margin-left: 9px; padding: 0 4px 0 2px; display: flex; align-items: center; justify-content: space-between; }
.scombo.off { color: #8a8a8a; margin-left: 9px; }
.s1 { margin-left: 8px; }
.zero { margin-left: 5px; width: 10px; }
.s2 { margin-left: 23px; }
.s3 { margin-left: 22px; }
.s4 { margin-left: 9px; }
.s5 { margin-left: 232px; }

.taskbar { height: 40px; flex: none; display: flex; align-items: center; background: linear-gradient(90deg, #213a45 0, #213a45 1100px, #3c4143 1450px, #454545 1700px, #444 2950px, #1c2a49 3060px, #1a2746 100%); }
.start { width: 48px; display: flex; justify-content: center; }
.search { width: 287px; height: 40px; background: #f3f3f3; border: 1px solid #8b9499; display: flex; align-items: center; padding-left: 10px; font-size: 15px; color: #333; overflow: hidden; }
.search span { margin-left: 10px; display: inline-block; }
.search .art { margin-left: auto; }
.appi { position: relative; width: 49.130px; height: 40px; display: flex; align-items: center; justify-content: center; flex: none; }
.appi.run { border-bottom: 3px solid transparent; background: linear-gradient(#76b9ed, #76b9ed) 50% 100% / 40px 3px no-repeat border-box; padding-top: 3px; }
.appi.cur { background: linear-gradient(#76b9ed, #76b9ed) 50% 100% / 48px 3px no-repeat border-box, #4e626b; }
.appi b { position: absolute; right: 9px; bottom: 3px; width: 14px; height: 14px; border-radius: 50%; color: #fff; font: 9px/14px "Open Sans", sans-serif; text-align: center; }
.weather { margin-left: auto; margin-right: 6px; display: flex; align-items: center; color: #f4f4f4; font-size: 15px; }
.weather svg { margin-right: 4px; }
.weather span { display: inline-block; }
.weather .cond { margin-left: 9px; }

.mark { position: absolute; left: 1590px; top: 1308px; pointer-events: none; }
</style>
